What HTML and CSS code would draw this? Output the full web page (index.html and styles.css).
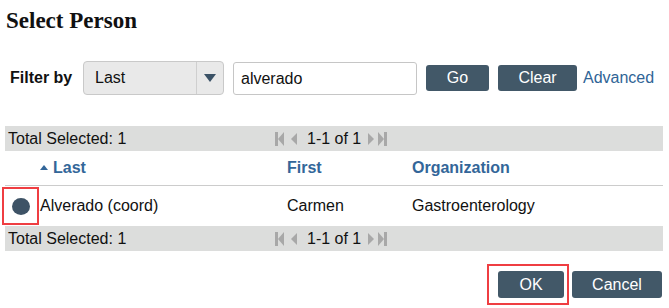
FILE: index.html
```html
<!DOCTYPE html>
<html>
<head>
<meta charset="utf-8">
<link rel="stylesheet" href="styles.css">
</head>
<body>
<div class="dialog">
  <h1 class="title">Select Person</h1>
  <div class="filter">
    <span class="filter-label">Filter by</span>
    <div class="select">
      <span class="select-value">Last</span>
      <span class="select-arrow"><svg width="12" height="8" viewBox="0 0 12 8"><path d="M0 0H12L6 8Z" fill="#3b5266"/></svg></span>
    </div>
    <div class="input">alverado</div>
    <button class="btn btn-go">Go</button>
    <button class="btn btn-clear">Clear</button>
    <a class="link">Advanced</a>
  </div>
  <div class="results">
    <div class="bar">
      <span class="total">Total Selected: 1</span>
      <span class="pager">
        <svg class="pg pg-first" width="9" height="14" viewBox="0 0 9 14"><rect x="0" y="0" width="3" height="14" fill="#a8a8a8"/><path d="M9 0V14L3 7Z" fill="#a8a8a8"/></svg>
        <svg class="pg pg-prev" width="6" height="12" viewBox="0 0 6 12"><path d="M6 0V12L0 6Z" fill="#a8a8a8"/></svg>
        <span class="pg-text">1-1 of 1</span>
        <svg class="pg pg-next" width="6" height="12" viewBox="0 0 6 12"><path d="M0 0V12L6 6Z" fill="#a8a8a8"/></svg>
        <svg class="pg pg-last" width="9" height="14" viewBox="0 0 9 14"><path d="M0 0V14L6 7Z" fill="#a8a8a8"/><rect x="6" y="0" width="3" height="14" fill="#a8a8a8"/></svg>
      </span>
    </div>
    <div class="row head">
      <span class="cell"></span>
      <span class="cell"><svg class="sort" width="8" height="5" viewBox="0 0 8 5"><path d="M0 5L4 0L8 5Z" fill="#336699"/></svg>Last</span>
      <span class="cell">First</span>
      <span class="cell">Organization</span>
    </div>
    <div class="row data">
      <span class="cell radio-cell"><span class="radio"></span><span class="mark mark-radio"></span></span>
      <span class="cell">Alverado (coord)</span>
      <span class="cell">Carmen</span>
      <span class="cell">Gastroenterology</span>
    </div>
    <div class="bar">
      <span class="total">Total Selected: 1</span>
      <span class="pager">
        <svg class="pg pg-first" width="9" height="14" viewBox="0 0 9 14"><rect x="0" y="0" width="3" height="14" fill="#a8a8a8"/><path d="M9 0V14L3 7Z" fill="#a8a8a8"/></svg>
        <svg class="pg pg-prev" width="6" height="12" viewBox="0 0 6 12"><path d="M6 0V12L0 6Z" fill="#a8a8a8"/></svg>
        <span class="pg-text">1-1 of 1</span>
        <svg class="pg pg-next" width="6" height="12" viewBox="0 0 6 12"><path d="M0 0V12L6 6Z" fill="#a8a8a8"/></svg>
        <svg class="pg pg-last" width="9" height="14" viewBox="0 0 9 14"><path d="M0 0V14L6 7Z" fill="#a8a8a8"/><rect x="6" y="0" width="3" height="14" fill="#a8a8a8"/></svg>
      </span>
    </div>
  </div>
  <div class="actions">
    <span class="mark-box"><button class="btn btn-ok">OK</button></span>
    <button class="btn btn-cancel">Cancel</button>
  </div>
</div>
</body>
</html>
```
FILE: styles.css
```css
html, body {
  margin: 0;
  padding: 0;
  background: #ffffff;
}
body {
  font-family: "Liberation Sans", Arial, sans-serif;
  font-size: 16px;
  color: #111111;
}
.dialog {
  width: 669px;
  height: 308px;
  overflow: hidden;
}
.title {
  margin: 0;
  padding: 7px 6px 0;
  font-family: "Liberation Serif", "Times New Roman", serif;
  font-weight: bold;
  font-size: 23px;
  line-height: 28px;
  color: #111111;
}
.filter {
  display: flex;
  align-items: center;
  height: 34px;
  margin-top: 26px;
  padding-left: 10px;
  white-space: nowrap;
}
.filter > * {
  flex: none;
}
.filter-label {
  font-weight: bold;
  width: 62px;
  margin-right: 11px;
}
.select {
  display: flex;
  box-sizing: border-box;
  width: 141px;
  height: 34px;
  border: 1px solid #c9c9c9;
  border-radius: 4px;
  background: #e9e9e9;
}
.select-value {
  flex: 1;
  padding-left: 11px;
  line-height: 32px;
}
.select-arrow {
  display: flex;
  align-items: center;
  justify-content: center;
  width: 26px;
  border-left: 1px solid #cfcfcf;
}
.input {
  box-sizing: border-box;
  width: 184px;
  height: 33px;
  margin-left: 9px;
  padding-left: 7px;
  border: 1px solid #c6c6c6;
  border-radius: 3px;
  line-height: 31px;
  background: #fff;
}
.btn {
  box-sizing: border-box;
  height: 26px;
  padding: 0;
  border: none;
  border-radius: 3px;
  background: #425868;
  color: #ffffff;
  font-family: "Liberation Sans", Arial, sans-serif;
  font-size: 16px;
  line-height: 26px;
  text-align: center;
}
.btn-go {
  width: 63px;
  margin-left: 9px;
}
.btn-clear {
  width: 79px;
  margin-left: 9px;
}
.link {
  margin-left: 6px;
  color: #2f6496;
}
.results {
  margin: 31px 6px 0 5px;
}
.bar {
  display: flex;
  align-items: center;
  height: 25px;
  background: #dcdddc;
  white-space: nowrap;
}
.total {
  flex: none;
  width: 267px;
  padding-left: 3px;
}
.pager {
  display: flex;
  align-items: center;
}
.pg-prev {
  margin-left: 7px;
}
.pg-text {
  margin-left: 10px;
  margin-right: 7px;
}
.pg-last {
  margin-left: 4px;
}
.row {
  display: grid;
  grid-template-columns: 35px 247px 125px 1fr;
  align-items: center;
  white-space: nowrap;
}
.head {
  height: 34px;
  border-bottom: 1px solid #cccccc;
  color: #336699;
  font-weight: bold;
}
.sort {
  margin-right: 5px;
  vertical-align: 3px;
}
.data {
  height: 40px;
}
.radio-cell {
  position: relative;
  height: 40px;
  display: flex;
  align-items: center;
}
.radio {
  display: block;
  width: 18px;
  height: 17px;
  margin-left: 7px;
  border-radius: 50%;
  background: #3e5366;
}
.mark-radio {
  position: absolute;
  left: -3px;
  top: 1px;
  width: 37px;
  height: 38px;
  box-sizing: border-box;
  border: 2px solid #ef3e42;
}
.actions {
  display: flex;
  justify-content: flex-end;
  align-items: center;
  margin-top: 13px;
  padding-right: 7px;
}
.mark-box {
  display: flex;
  box-sizing: border-box;
  height: 41px;
  padding: 5px 3px 5px 9px;
  border: 2px solid #ef3e42;
}
.btn-ok {
  width: 66px;
  height: 27px;
}
.btn-cancel {
  width: 90px;
  height: 27px;
  margin-left: 3px;
}
```
